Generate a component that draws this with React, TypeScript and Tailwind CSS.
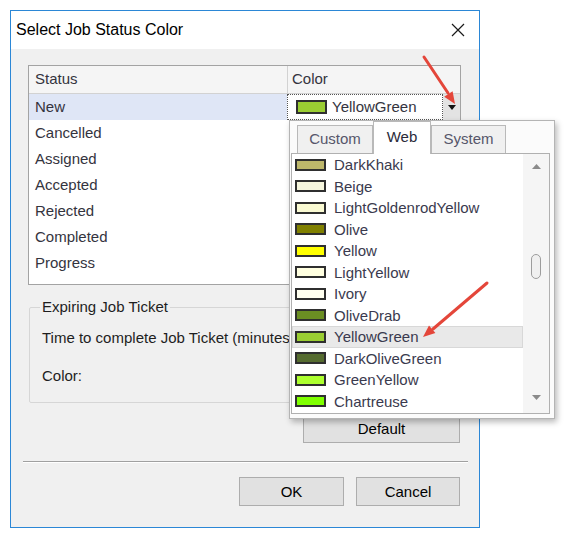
import React from 'react';

const statuses = ['New', 'Cancelled', 'Assigned', 'Accepted', 'Rejected', 'Completed', 'Progress'];

const webColors = [
  { name: 'DarkKhaki', hex: '#BDB76B' },
  { name: 'Beige', hex: '#F5F5DC' },
  { name: 'LightGoldenrodYellow', hex: '#FAFAD2' },
  { name: 'Olive', hex: '#808000' },
  { name: 'Yellow', hex: '#FFFF00' },
  { name: 'LightYellow', hex: '#FFFFE0' },
  { name: 'Ivory', hex: '#FFFFF0' },
  { name: 'OliveDrab', hex: '#6B8E23' },
  { name: 'YellowGreen', hex: '#9ACD32' },
  { name: 'DarkOliveGreen', hex: '#556B2F' },
  { name: 'GreenYellow', hex: '#ADFF2F' },
  { name: 'Chartreuse', hex: '#7FFF00' },
];

const selectedColor = 'YellowGreen';

const WinButton: React.FC<{ label: string; className?: string }> = ({ label, className = '' }) => (
  <button
    type="button"
    className={`h-[29px] border border-[#adadad] bg-[#e1e1e1] text-[15px] leading-none text-black ${className}`}
  >
    {label}
  </button>
);

// Swatch + name row inside the colour drop-down list
const ColorItem: React.FC<{ name: string; hex: string; selected: boolean }> = ({ name, hex, selected }) => (
  <div
    className={`flex h-[21.5px] items-center gap-[8px] pl-[3px] ${
      selected ? 'bg-[#e9e9e9] outline outline-1 -outline-offset-1 outline-[#d8d8d8]' : ''
    }`}
  >
    <span className="h-[12px] w-[31px] shrink-0 border-2 border-[#2f2f2f]" style={{ backgroundColor: hex }} />
    <span className="text-[15px] leading-none text-[#3a3a4e]">{name}</span>
  </div>
);

const ColorPopup: React.FC = () => (
  <div className="absolute left-[289px] top-[120px] flex h-[299px] w-[266px] flex-col border border-[#b4b4b4] bg-[#fbfbfb] pb-[4px] pl-[1px] pr-[4px] shadow-[2px_3px_6px_rgba(0,0,0,0.28)]">
    {/* tab strip */}
    <div className="flex h-[32px] items-end pl-[6px]">
      <div className="flex h-[28px] w-[76px] items-center justify-center border border-b-0 border-[#b9b9b9] bg-[#f0f0f0] text-[15px] text-[#56566a]">
        Custom
      </div>
      <div className="relative z-10 -mb-px flex h-[33px] w-[58px] items-center justify-center border border-b-0 border-[#b9b9b9] bg-white pb-[2px] text-[15px] text-[#2a2a3a]">
        Web
      </div>
      <div className="flex h-[28px] w-[75px] items-center justify-center border border-b-0 border-[#b9b9b9] bg-[#f0f0f0] text-[15px] text-[#56566a]">
        System
      </div>
    </div>

    {/* list with scrollbar */}
    <div className="flex flex-1 border border-[#b0b0b0] bg-white">
      <div className="flex-1">
        {webColors.map((c) => (
          <ColorItem key={c.name} name={c.name} hex={c.hex} selected={c.name === selectedColor} />
        ))}
      </div>
      <div className="flex w-[26px] flex-col items-center bg-[#f5f5f5]">
        <svg width="9" height="5" viewBox="0 0 9 5" className="mt-[10px]">
          <path d="M0 5 L4.5 0 L9 5 Z" fill="#8a8a8a" />
        </svg>
        <div className="mt-[85px] h-[25px] w-[10px] rounded-[5px] border border-[#9d9d9d] bg-[#f0f0f0]" />
        <svg width="9" height="5" viewBox="0 0 9 5" className="mb-[13px] mt-auto">
          <path d="M0 0 L9 0 L4.5 5 Z" fill="#8a8a8a" />
        </svg>
      </div>
    </div>
  </div>
);

const StatusGrid: React.FC = () => (
  <div className="ml-[17px] mt-[16px] h-[220px] w-[433px] border border-[#a3a3a3] bg-white text-[15px] text-[#34343e]">
    <div className="flex h-[28px] border-b border-[#d2d2d2] bg-[#f5f5f5]">
      <div className="flex w-[258px] items-center pl-[6px]">Status</div>
      <div className="flex flex-1 items-center border-l border-[#d2d2d2] pl-[4px]">Color</div>
    </div>
    {statuses.map((s, i) => (
      <div key={s} className="flex h-[26px]">
        <div className={`flex w-[258px] items-center pl-[6px] ${i === 0 ? 'bg-[#dfe6f6]' : ''}`}>{s}</div>
        {i === 0 && (
          <div className="flex flex-1">
            <div className="flex w-[156px] items-center border border-dotted border-[#555] pl-[8px]">
              <span className="h-[14px] w-[31px] border-2 border-[#2f2f2f] bg-[#9ACD32]" />
              <span className="ml-[5px]">YellowGreen</span>
            </div>
            <div className="flex flex-1 items-center justify-center bg-[#e3e3e3]">
              <svg width="8" height="5" viewBox="0 0 8 5">
                <path d="M0 0 L8 0 L4 5 Z" fill="#111" />
              </svg>
            </div>
          </div>
        )}
      </div>
    ))}
  </div>
);

const App: React.FC = () => {
  return (
    <div className="relative h-[539px] w-[567px] overflow-hidden bg-white pl-[10px] pt-[10px] font-['Liberation_Sans',Arial,sans-serif]">
      <div className="flex h-[518px] w-[470px] flex-col border border-[#2b87d6]">
        {/* title bar */}
        <div className="flex h-[38px] shrink-0 items-center justify-between bg-white pl-[5px] pr-[14px]">
          <span className="text-[16px] text-black">Select Job Status Color</span>
          <svg width="14" height="14" viewBox="0 0 14 14">
            <path d="M1 1 L13 13 M13 1 L1 13" stroke="#1a1a1a" strokeWidth="1.2" />
          </svg>
        </div>

        {/* client area */}
        <div className="flex flex-1 flex-col bg-[#f0f0f0]">
          <StatusGrid />

          <fieldset className="ml-[18px] mt-[13px] w-[432px] rounded-[2px] border border-[#d6d6d6] pb-[17px] pl-[10px] text-[15px] text-[#1e1e1e]">
            <legend className="px-[2px] leading-[18px]">Expiring Job Ticket</legend>
            <div className="mt-[13px] pl-[2px] leading-[18px]">Time to complete Job Ticket (minutes):</div>
            <div className="mt-[20px] pl-[2px] leading-[18px]">Color:</div>
          </fieldset>

          <WinButton label="Default" className="ml-[292px] mt-[11px] w-[157px]" />

          <div className="ml-[12px] mt-[18px] w-[445px] border-b border-t border-b-white border-t-[#a0a0a0]" />

          <div className="mt-[14px] flex gap-[12px] pl-[228px]">
            <WinButton label="OK" className="w-[105px]" />
            <WinButton label="Cancel" className="w-[104px]" />
          </div>
        </div>
      </div>

      <ColorPopup />

      {/* red annotation arrows */}
      <svg className="pointer-events-none absolute inset-0" width="567" height="539" viewBox="0 0 567 539">
        <g stroke="#e4463a" strokeWidth="3" strokeLinecap="round" fill="#e4463a">
          <line x1="424" y1="57" x2="448" y2="93" />
          <path d="M444.2 96.8 L452.6 91.2 L455 104 Z" stroke="none" />
          <line x1="487" y1="283" x2="433" y2="329" />
          <path d="M429 325.5 L435.4 333.1 L423 337 Z" stroke="none" />
        </g>
      </svg>
    </div>
  );
};

export default App;
